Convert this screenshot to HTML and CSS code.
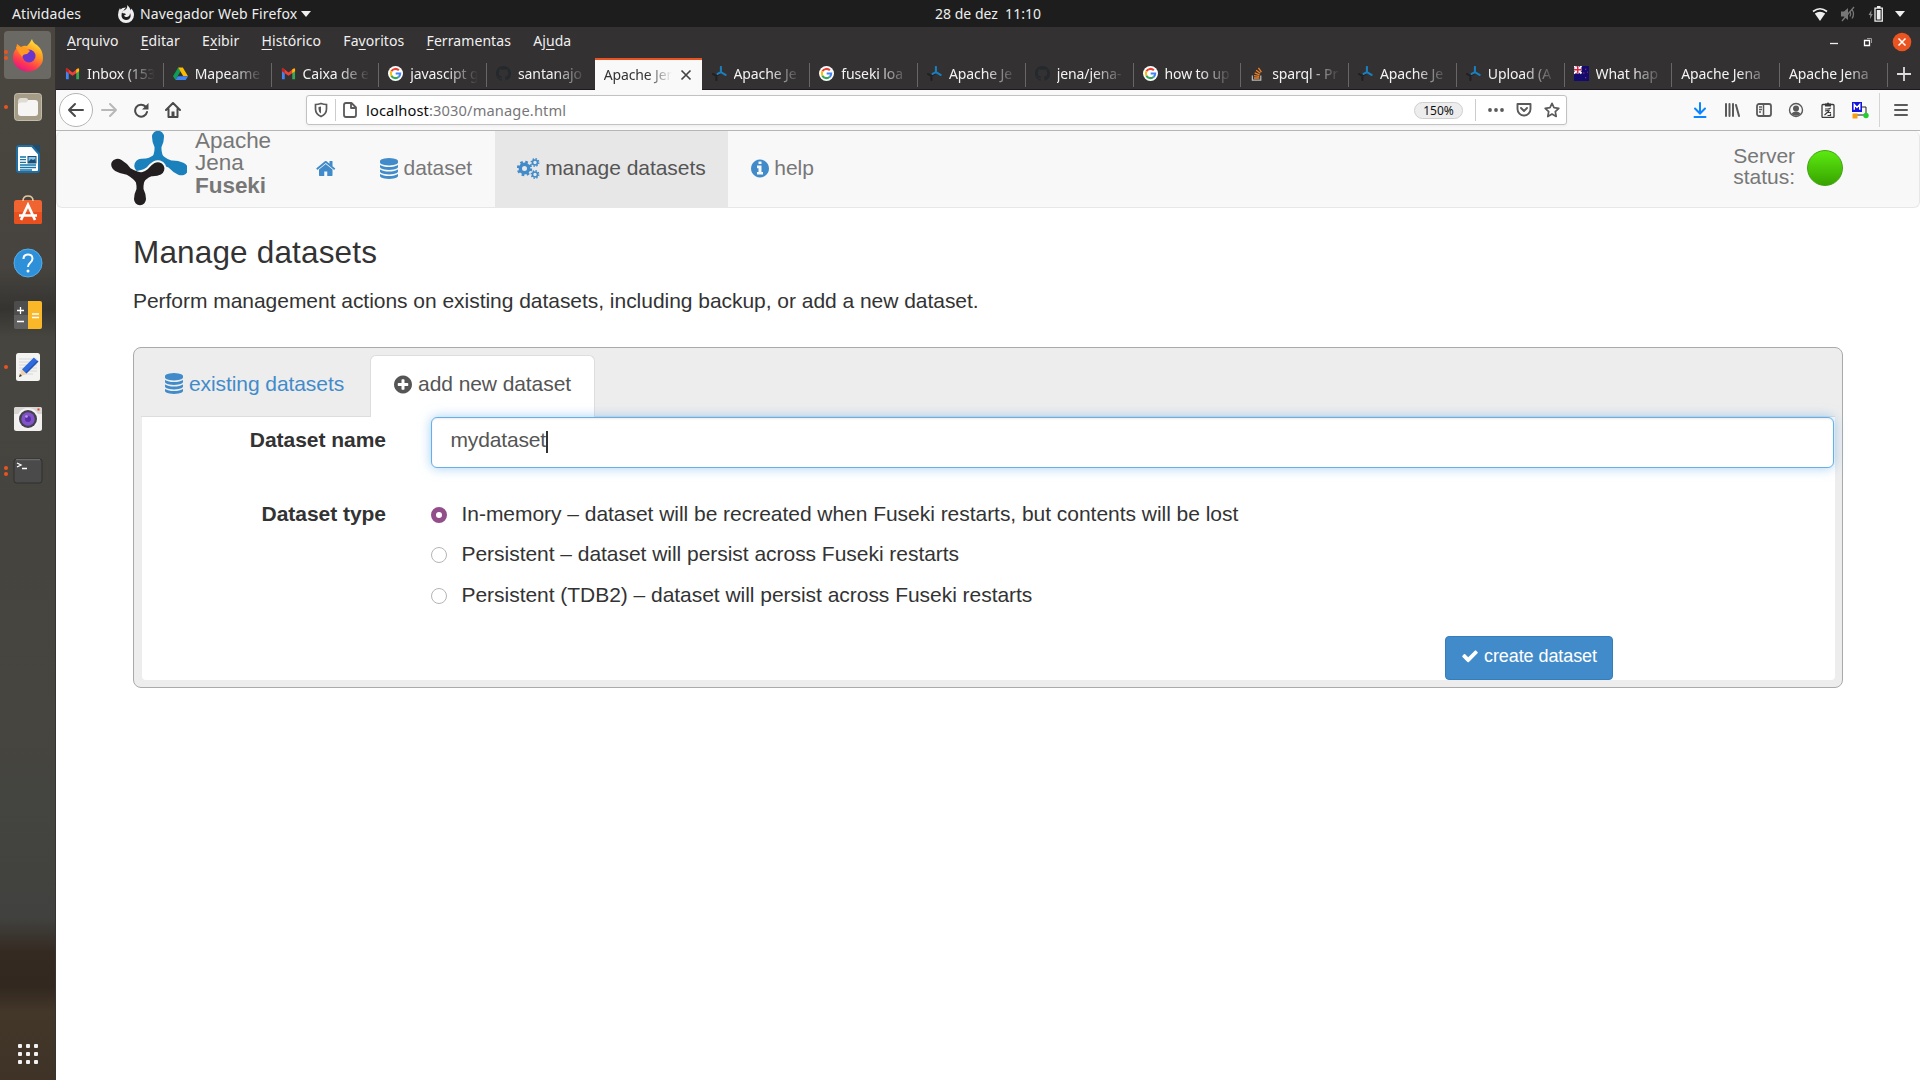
FILE: index.html
```html
<!DOCTYPE html>
<html lang="pt-BR">
<head>
<meta charset="utf-8">
<title>Apache Jena Fuseki</title>
<link rel="stylesheet" href="styles.css">
</head>
<body>
<svg class="defs" width="0" height="0">
  <symbol id="jena" viewBox="0 0 76 75">
    <g class="jena-top">
      <path transform="translate(47 27)" d="M-7 3Q-3-5-3.500-11-6-16-6-21A6 6.200 0 0 1 6-21Q6-16 3.500-11 3-5 7 3z"/>
      <path transform="translate(47 28) rotate(113) scale(1.080 1.180)" d="M-7 3Q-3-5-3.500-11-6-16-6-21A6 6.200 0 0 1 6-21Q6-16 3.500-11 3-5 7 3z"/>
      <path transform="translate(47 28) rotate(-112)" d="M-7 3Q-4-5-5-11-7-16-7-18A7 7 0 0 1 7-18Q7-16 5-11 4-5 7 3z"/>
    </g>
    <path class="jena-halo" transform="translate(29 47) rotate(61)" d="M-7 3Q-3-5-4-11-6-16-6-20A6 6.200 0 0 1 7-20Q7-16 4-11 3-5 7 3z"/>
    <g class="jena-bottom">
      <path transform="translate(29 47) rotate(61)" d="M-7 3Q-3-5-4-11-6-16-6-20A6 6.200 0 0 1 7-20Q7-16 4-11 3-5 7 3z"/>
      <path transform="translate(29 47) rotate(-60) scale(1.060 1.190)" d="M-7 3Q-3-5-3.500-11-6-16-6-21A6 6.200 0 0 1 6-21Q6-16 3.500-11 3-5 7 3z"/>
      <path transform="translate(29 47) rotate(180)" d="M-7 3Q-3-5-3.500-11-6-16-6-21A6 6.200 0 0 1 6-21Q6-16 3.500-11 3-5 7 3z"/>
    </g>
  </symbol>
  <symbol id="jena-small" viewBox="0 0 16 16"><g fill="none" stroke-width="2.200" stroke-linecap="round"><path stroke="#231f20" d="M1 8.500 4.500 10.500 8 8.500M4.700 10.500v4.500"/><path stroke="#1b7fbd" d="M9.500 1v5.500L6 8.500M9.500 6.500l5 3"/></g></symbol>
  <symbol id="gmail" viewBox="0 0 16 16"><path fill="#4285f4" d="M1 14V4l3 2v8z"/><path fill="#34a853" d="M12 14V6l3-2v10z"/><path fill="#ea4335" d="M1 3q1-1 2 0l5 4 5-4q1-1 2 0v2.500L8 10.500 1 5.500z"/><path fill="#c5221f" d="M1 3q1-1 3 .8v3.800L1 5.500z"/><path fill="#fbbc04" d="M15 3q-1-1-3 .8v3.800l3-2.100z"/></symbol>
  <symbol id="drive" viewBox="0 0 16 16"><path fill="#0f9d58" d="M5.500 1.500 0 11l2.600 4L8 5.500z"/><path fill="#fbbc04" d="M5.500 1.500h5L16 11h-5z"/><path fill="#4285f4" d="M5.200 11H16l-2.500 4H2.600z"/></symbol>
  <symbol id="google" viewBox="0 0 16 16"><circle cx="8" cy="8" r="8" fill="#fff"/><g fill="none" stroke-width="2.200"><path stroke="#ea4335" d="M11.600 4.600A5 5 0 0 0 3.600 5.700"/><path stroke="#fbbc05" d="M3.600 5.700a5 5 0 0 0 0 4.600"/><path stroke="#34a853" d="M3.600 10.300a5 5 0 0 0 7.700 1.400"/><path stroke="#4285f4" d="M11.300 11.700A5 5 0 0 0 13 8H8.200"/></g></symbol>
  <symbol id="github" viewBox="0 0 16 16"><path fill="#24292e" d="M8 0C3.580 0 0 3.580 0 8c0 3.540 2.290 6.530 5.470 7.590.4.070.55-.17.55-.38v-1.490c-2.010.37-2.530-.49-2.690-.94-.09-.23-.48-.94-.82-1.130-.28-.15-.68-.52-.01-.53.63-.01 1.080.58 1.230.82.72 1.210 1.870.87 2.330.66.07-.52.28-.87.51-1.070-1.780-.2-3.640-.89-3.640-3.950 0-.87.31-1.590.82-2.150-.08-.2-.36-1.020.08-2.120 0 0 .67-.21 2.200.82a7.600 7.600 0 0 1 4 0c1.530-1.040 2.200-.82 2.200-.82.44 1.100.16 1.920.08 2.120.51.56.82 1.270.82 2.150 0 3.070-1.870 3.750-3.650 3.950.29.25.54.73.54 1.480v2.200c0 .21.15.46.55.38A8 8 0 0 0 16 8c0-4.420-3.580-8-8-8z"/></symbol>
  <symbol id="stack" viewBox="0 0 16 16"><path fill="none" stroke="#bcbbbb" stroke-width="1.300" d="M2.500 10v5h9v-5"/><path stroke="#f48024" stroke-width="1.400" d="M4.200 12.800h5.700M4.300 10.200l5.600.9M5 7.400l5.200 2M6.500 4.500l4.500 3.200M9 2l3.200 4.500"/></symbol>
  <symbol id="flag" viewBox="0 0 16 16"><path fill="#130b6d" d="M0 0h16v16H0z"/><path stroke="#fff" stroke-width="2" d="M0 0l8 8M8 0 0 8"/><path stroke="#fff" stroke-width="3" d="M4 0v8M0 4h8"/><path stroke="#e0243c" stroke-width="1.600" d="M4 0v8M0 4h8"/><path fill="#e04a60" d="M12 3h1v1h-1zM10 7h1v1h-1zM14 6h1v1h-1zM12 12h1v1h-1z"/></symbol>
  <symbol id="db" viewBox="128 0 1536 1792"><path d="M896 768q237 0 443-43t325-127v170q0 69-103 128t-280 93.500-385 34.500-385-34.500-280-93.500-103-128v-170q119 84 325 127t443 43zm0 768q237 0 443-43t325-127v170q0 69-103 128t-280 93.500-385 34.500-385-34.500-280-93.500-103-128v-170q119 84 325 127t443 43zm0-384q237 0 443-43t325-127v170q0 69-103 128t-280 93.500-385 34.500-385-34.500-280-93.500-103-128v-170q119 84 325 127t443 43zm0-1152q208 0 385 34.500t280 93.500 103 128v128q0 69-103 128t-280 93.500-385 34.500-385-34.500-280-93.500-103-128v-128q0-69 103-128t280-93.500 385-34.500z"/></symbol>
</svg>

<header class="topbar">
  <span class="activities">Atividades</span>
  <span class="app"><svg width="16" height="18" viewBox="0 0 16 18"><path fill="#eee" d="M8 2.500q-4 0-5.500 2L2 3Q0 6 0 10a8 8 0 0 0 16 0q0-4-3-6.500v2Q12 2 9 0q1 3-2 5Q5 5 4 8q1 0 3 .5l1 1-2 1q1 2 3 1.500 3-.5 3-4 1 2 .5 4A4.700 4.700 0 0 1 3.500 11Q3 8 5 6z"/></svg><b>Navegador Web Firefox</b><i class="caret"></i></span>
  <span class="clock">28 de dez&nbsp; 11:10</span>
  <span class="tray">
    <svg width="16" height="14" viewBox="0 0 16 14"><path fill="#eee" d="M8 14 2.800 6.500Q8 2.800 13.200 6.500z"/><path d="M1 4.500Q8-1 15 4.500" fill="none" stroke="#eee" stroke-width="1.600"/></svg>
    <svg width="16" height="16" viewBox="0 0 16 16"><path fill="#777" d="M1 5.500h3L8 2v12L4 10.500H1z"/><path fill="none" stroke="#777" stroke-width="1.300" d="M10 5.500q1.500 2.500 0 5M12 3.500q3 4.500 0 9M2 15 14 1"/></svg>
    <svg width="16" height="16" viewBox="0 0 16 16"><path fill="#888" d="M3.500 4 .5 9H2.300L2 13 4.800 8H3.200z"/><path fill="none" stroke="#eee" stroke-width="1.300" d="M7 2.200h7.300v13H7z"/><path fill="#eee" d="M8.800 4h3.800v9.500H8.800zM9 0h3.500v2H9z"/></svg>
    <i class="caret"></i>
  </span>
</header>

<div class="desktop">
  <aside class="dock">
    <div class="launcher on"><i class="run"></i><i class="run"></i><svg width="32" height="34" viewBox="0 0 32 34"><defs><linearGradient id="fx" x1=".8" y1="0" x2=".3" y2="1"><stop offset="0" stop-color="#fff044"/><stop offset=".4" stop-color="#ff9a1f"/><stop offset=".75" stop-color="#ff3a4e"/><stop offset="1" stop-color="#e31587"/></linearGradient></defs><path fill="url(#fx)" d="M20 1q1 4 5 6 6 5 6 13a15 13.500 0 0 1-30 0q0-6 3-9l1-5 4 3q3-2 6-1 3-3 5-7z"/><circle cx="17" cy="18" r="6.500" fill="#6a35cf"/><path fill="#ff9b25" d="M4 9q4-1 6 1 4-1 8 3l-3 3q-4 0-5 3-4-5-6-10z"/></svg></div>
    <div class="launcher"><i class="run"></i><svg width="28" height="28" viewBox="0 0 28 28"><rect x=".5" y=".5" width="27" height="27" rx="3" fill="#a49c86" stroke="#c1bbaa"/><rect x="4" y="7" width="20" height="16" rx="3" fill="#f6f5f3"/><path fill="#dedbd2" d="M4 9q0-4 3-4h5q2 0 2 2t-3 2.500H7q-2 0-3 2z"/></svg></div>
    <div class="launcher"><svg width="24" height="28" viewBox="0 0 24 28"><path fill="#fff" stroke="#1f6fa5" stroke-width="2" d="M3 1h13l7 8v16q0 2-2 2H3q-2 0-2-2V3q0-2 2-2z"/><path fill="#174f79" d="M17 0h5q2 0 2 2v6z"/><path stroke="#1274a8" stroke-width="1.300" d="M4 12h6M4 14.700h6M4 17.300h6M4 20h16M4 22.500h16M4 25h12"/><rect x="12" y="11.500" width="8" height="6.500" fill="#8bc1e2" stroke="#174f79"/><path d="m12 17 3-3 2 1 2-1 1 4h-8z" fill="#174f79"/></svg></div>
    <div class="launcher"><svg class="store" width="28" height="30" viewBox="0 0 28 30"><rect x="0" y="5" width="28" height="24" rx="2.500" fill="#ef6430"/><path fill="#e8501f" d="M0 17h28v10q0 2-2 2H2q-2 0-2-2z"/><path fill="none" stroke="#e3c9a2" stroke-width="1.600" d="M9 6q0-5 5-5t5 5"/><path fill="none" stroke="#fff" stroke-width="2.700" d="m7 25 7-15 7 15M5 20.500h18"/></svg></div>
    <div class="launcher"><svg width="30" height="30" viewBox="0 0 30 30"><circle cx="15" cy="15" r="14" fill="#2e90d8" stroke="#59ade6"/><path fill="none" stroke="#fff" stroke-width="2" d="M10.500 11q0-4.500 4.500-4.500t4.500 4q0 2.500-2.500 4.500-2 1.500-2 4"/><circle cx="15" cy="23" r="1.500" fill="#fff"/></svg></div>
    <div class="launcher"><svg width="28" height="28" viewBox="0 0 28 28"><rect width="28" height="28" rx="2" fill="#4d4d4d"/><path fill="#606060" d="M0 14h14v14H2q-2 0-2-2z"/><path fill="#fab728" d="M14 0h12q2 0 2 2v24q0 2-2 2H14z"/><path stroke="#fff" stroke-width="1.300" d="M3 9.500h7M6.500 6v7M3 20.500h7M18 13h7M18 16.500h7"/></svg></div>
    <div class="launcher"><i class="run"></i><svg width="26" height="28" viewBox="0 0 26 28"><rect x="1" width="24" height="28" rx="2.500" fill="#f3f3f2"/><path stroke="#d7d7d7" d="M4 6h18M4 9h18M4 12h18M4 15h18M4 18h18M4 21h14"/><path stroke="#2f6bdc" stroke-width="6" d="M9 18.500 21 6.500"/><path stroke="#2451b4" stroke-width="1.500" d="M11 20 23 8"/><path fill="#f1cfa7" d="m7 16.500 4.300 4.300L4 24z"/><path fill="#333" d="m5 21 2 2-3 1z"/></svg></div>
    <div class="launcher"><svg width="28" height="26" viewBox="0 0 28 26"><rect y="1" width="28" height="24" rx="2.500" fill="#f1efed"/><path fill="#d8d5d2" d="M0 3q0-2 2-2h24q2 0 2 2v5H0z"/><circle cx="14" cy="13" r="11" fill="#f4f3f2"/><circle cx="14" cy="13" r="9" fill="#42404d"/><circle cx="14" cy="13" r="6.700" fill="#8252c9"/><circle cx="14" cy="13" r="3" fill="#5a2fa5"/><circle cx="12.500" cy="10.500" r="1.300" fill="#b99be6"/><path fill="#dd3b3b" d="M23.500 2.500h2v2h-2z"/></svg></div>
    <div class="launcher"><i class="run"></i><i class="run"></i><svg width="30" height="26" viewBox="0 0 30 26"><rect x="1" y="1" width="28" height="24" rx="2.500" fill="#4a4a4a" stroke="#2e2e2e"/><path stroke="#777" d="M3 1.700h24"/><path fill="none" stroke="#fff" stroke-width="1.300" d="m4 5 4 2-4 2M9 10.500h5"/></svg></div>
    <div class="grid"><i></i><i></i><i></i><i></i><i></i><i></i><i></i><i></i><i></i></div>
  </aside>

  <div class="window">
    <div class="menubar">
      <nav class="menus"><span><u>A</u>rquivo</span><span><u>E</u>ditar</span><span>E<u>x</u>ibir</span><span><u>H</u>istórico</span><span>Fa<u>v</u>oritos</span><span><u>F</u>erramentas</span><span>Aj<u>u</u>da</span></nav>
      <div class="controls">
        <svg width="10" height="14" viewBox="0 0 10 14"><path stroke="#eee" stroke-width="1.300" d="M1 8.500h8"/></svg>
        <svg width="10" height="10" viewBox="0 0 10 10"><path fill="none" stroke="#fff" stroke-width="1.300" d="M1.500 3.500h5v5h-5z"/><path fill="none" stroke="#999" d="M4 1.500h4.500V6"/></svg>
        <svg width="20" height="20" viewBox="0 0 20 20"><circle cx="10" cy="10" r="9.300" fill="#e95420"/><path stroke="#fff" stroke-width="1.500" d="m6.500 6.500 7 7m0-7-7 7"/></svg>
      </div>
    </div>

    <div class="tabs">
      <div class="tab"><svg><use href="#gmail"/></svg><span>Inbox (153</span></div>
      <div class="tab"><svg><use href="#drive"/></svg><span>Mapeame</span></div>
      <div class="tab"><svg><use href="#gmail"/></svg><span>Caixa de e</span></div>
      <div class="tab"><svg><use href="#google"/></svg><span>javascipt g</span></div>
      <div class="tab before"><svg><use href="#github"/></svg><span>santanajo</span></div>
      <div class="tab active"><span>Apache Jen</span><svg viewBox="0 0 16 16"><path stroke="#444" stroke-width="1.700" d="m3.500 3.500 9 9m0-9-9 9"/></svg></div>
      <div class="tab"><svg><use href="#jena-small"/></svg><span>Apache Je</span></div>
      <div class="tab"><svg><use href="#google"/></svg><span>fuseki loa</span></div>
      <div class="tab"><svg><use href="#jena-small"/></svg><span>Apache Je</span></div>
      <div class="tab"><svg><use href="#github"/></svg><span>jena/jena-</span></div>
      <div class="tab"><svg><use href="#google"/></svg><span>how to up</span></div>
      <div class="tab"><svg><use href="#stack"/></svg><span>sparql - Pr</span></div>
      <div class="tab"><svg><use href="#jena-small"/></svg><span>Apache Je</span></div>
      <div class="tab"><svg><use href="#jena-small"/></svg><span>Upload (A</span></div>
      <div class="tab"><svg><use href="#flag"/></svg><span>What hap</span></div>
      <div class="tab"><span>Apache Jena</span></div>
      <div class="tab"><span>Apache Jena</span></div>
      <div class="newtab"><svg width="16" height="16" viewBox="0 0 16 16"><path stroke="#ddd" stroke-width="1.800" d="M8 1v14M1 8h14"/></svg></div>
    </div>

    <div class="toolbar">
      <span class="back"><svg width="18" height="16" viewBox="0 0 18 16"><path fill="none" stroke="#4a4a4b" stroke-width="2" stroke-linecap="round" stroke-linejoin="round" d="M16 8H2m6-6L2 8l6 6"/></svg></span>
      <svg class="fwd" width="18" height="16" viewBox="0 0 18 16"><path fill="none" stroke="#b8b8b8" stroke-width="2" stroke-linecap="round" stroke-linejoin="round" d="M2 8h14m-6-6 6 6-6 6"/></svg>
      <svg class="reload" width="16" height="16" viewBox="0 0 16 16"><path fill="none" stroke="#4a4a4b" stroke-width="2" stroke-linecap="round" d="M12.500 4.500A6 6 0 1 0 14 10"/><path fill="#4a4a4b" d="M15.500 1v6.500H9z"/></svg>
      <svg class="house" width="16" height="16" viewBox="0 0 16 16"><path fill="none" stroke="#4a4a4b" stroke-width="2" stroke-linecap="round" stroke-linejoin="round" d="m1 8 7-7 7 7M3.500 7v8h9V7"/><path fill="#4a4a4b" d="M6.500 9.500h3V15h-3z"/></svg>
      <div class="urlbar">
        <svg class="shield" width="14" height="16" viewBox="0 0 14 16"><path fill="none" stroke="#5a5a5b" stroke-width="1.700" d="M7 1.500q3 1 5.500 1V7q0 5-5.500 7.500Q1.500 12 1.500 7V2.500q2.500 0 5.500-1z"/><path fill="#5a5a5b" d="M7 4.500v7Q4.500 10 4.500 7V5z"/></svg>
        <i class="sep"></i>
        <svg class="page" width="14" height="16" viewBox="0 0 14 16"><path fill="none" stroke="#5a5a5b" stroke-width="1.800" stroke-linejoin="round" d="M3 1h5.500L13 5.500V13q0 2-2 2H3q-2 0-2-2V3q0-2 2-2zM8 1v5h5"/></svg>
        <span class="url">localhost<em>:3030/manage.html</em></span>
        <span class="zoom">150%</span>
        <i class="sep"></i>
        <svg class="dots" width="16" height="16" viewBox="0 0 16 16"><circle cx="2" cy="8" r="1.900"/><circle cx="8" cy="8" r="1.900"/><circle cx="14" cy="8" r="1.900"/></svg>
        <svg class="pocket" width="16" height="16" viewBox="0 0 16 16"><path fill="none" stroke="#5a5a5b" stroke-width="1.900" stroke-linecap="round" stroke-linejoin="round" d="M1.500 2h13v5a6.500 6.500 0 0 1-13 0zM5 6l3 3 3-3"/></svg>
        <svg class="star" width="16" height="16" viewBox="0 0 16 16"><path fill="none" stroke="#5a5a5b" stroke-width="1.700" stroke-linejoin="round" d="m8 1.300 2 4.400 4.800.6-3.500 3.300.9 4.900L8 12.100l-4.200 2.400.9-4.900L1.200 6.300 6 5.700z"/></svg>
      </div>
      <div class="tools">
        <svg width="16" height="16" viewBox="0 0 16 16"><path fill="none" stroke="#0a84ff" stroke-width="2" stroke-linecap="round" d="M8 1v10M3 6.500 8 11.500l5-5M2.500 15h11"/></svg>
        <svg width="16" height="16" viewBox="0 0 16 16"><path stroke="#5a5a5b" stroke-width="2" stroke-linecap="round" d="M2 2v12M5.500 2v12M9 2v12M12 3l3 11"/></svg>
        <svg width="16" height="16" viewBox="0 0 16 16"><rect x="1" y="2" width="14" height="12" rx="2" fill="none" stroke="#5a5a5b" stroke-width="1.800"/><path stroke="#5a5a5b" stroke-width="1.500" d="M7.500 2v12M3 5h3M3 7.500h3M3 10h2"/></svg>
        <svg width="16" height="16" viewBox="0 0 16 16"><circle cx="8" cy="8" r="6.500" fill="none" stroke="#5a5a5b" stroke-width="1.400"/><circle cx="8" cy="6.500" r="3" fill="#5a5a5b"/><path fill="#5a5a5b" d="M3.500 12q1-2.500 4.500-2.500t4.500 2.500Q8 15.500 3.500 12z"/></svg>
        <svg width="16" height="16" viewBox="0 0 16 16"><rect x="2" y="2.500" width="12" height="13" rx="1" fill="none" stroke="#3a3a3b" stroke-width="1.300"/><path fill="#3a3a3b" d="M5 1.500h2a1 1 0 0 1 2 0h2v3H5z"/><path fill="none" stroke="#3a3a3b" stroke-width="1.200" d="M5 7h3l3-1M5 9l5-1M4.500 13 9 9M8 10.500h3M7.500 13.500h3v-2"/></svg>
        <svg width="18" height="17" viewBox="0 0 18 17"><path fill="none" stroke="#222" d="M11 5h4v8H5"/><path fill="#1414e0" d="M1 0h10v10H1z"/><path fill="none" stroke="#fff" stroke-width="1.400" d="M3.300 7.800V2.500L6 5.500l2.700-3v5.300"/><path fill="#f79d12" d="M1.500 11.500h5v5h-5z"/><circle cx="15" cy="13.500" r="2.700" fill="#22cf2e"/></svg>
        <i class="sep tall"></i>
        <svg width="16" height="16" viewBox="0 0 16 16"><path stroke="#5a5a5b" stroke-width="2" stroke-linecap="round" d="M2 3h12M2 8h12M2 13h12"/></svg>
      </div>
    </div>

    <main class="web">
      <div class="navbar">
        <div class="brand"><svg width="76" height="75"><use href="#jena"/></svg><span>Apache<br>Jena<br><b>Fuseki</b></span></div>
        <div class="navitem home"><svg width="19.500" height="21" viewBox="64 0 1664 1792"><path d="M1472 992v480q0 26-19 45t-45 19h-384v-384h-256v384h-384q-26 0-45-19t-19-45v-480q0-1 .5-3t.5-3l575-474 575 474q1 2 1 6zm223-69l-62 74q-8 9-21 11h-3q-13 0-21-7l-692-577-692 577q-12 8-24 7-13-2-21-11l-62-74q-8-10-7-23.500t11-21.500l719-599q32-26 76-26t76 26l244 204v-195q0-14 9-23t23-9h192q14 0 23 9t9 23v408l219 182q10 8 11 21.500t-7 23.500z"/></svg></div>
        <div class="navitem"><svg width="18" height="21"><use href="#db"/></svg><span>dataset</span></div>
        <div class="navitem current"><svg width="22.500" height="21" viewBox="0 0 22.500 21"><g fill="none"><circle cx="7.500" cy="10.500" r="4.200" stroke="#428bca" stroke-width="3.400"/><circle cx="7.500" cy="10.500" r="6.500" stroke="#428bca" stroke-width="2.400" stroke-dasharray="2.600 2.505"/><circle cx="18" cy="4.500" r="2.500" stroke="#428bca" stroke-width="1.600"/><circle cx="18" cy="4.500" r="3.700" stroke="#428bca" stroke-width="1.500" stroke-dasharray="1.450 1.456"/><circle cx="18" cy="16.500" r="2.500" stroke="#428bca" stroke-width="1.600"/><circle cx="18" cy="16.500" r="3.700" stroke="#428bca" stroke-width="1.500" stroke-dasharray="1.450 1.456"/></g></svg><span>manage datasets</span></div>
        <div class="navitem"><svg width="18" height="21" viewBox="128 0 1536 1792"><path d="M1152 1376v-160q0-14-9-23t-23-9h-96v-512q0-14-9-23t-23-9h-320q-14 0-23 9t-9 23v160q0 14 9 23t23 9h96v320h-96q-14 0-23 9t-9 23v160q0 14 9 23t23 9h448q14 0 23-9t9-23zm-128-896v-160q0-14-9-23t-23-9h-192q-14 0-23 9t-9 23v160q0 14 9 23t23 9h192q14 0 23-9t9-23zm640 416q0 209-103 385.500t-279.500 279.500-385.500 103-385.500-103-279.500-279.500-103-385.500 103-385.500 279.500-279.500 385.500-103 385.500 103 279.500 279.500 103 385.500z"/></svg><span>help</span></div>
        <div class="status"><span>Server<br>status:</span><i class="led"></i></div>
      </div>

      <section class="content">
        <h1>Manage datasets</h1>
        <p>Perform management actions on existing datasets, including backup, or add a new dataset.</p>
        <div class="panel">
          <div class="pills">
            <div class="pill"><svg width="18" height="21"><use href="#db"/></svg><span>existing datasets</span></div>
            <div class="pill selected"><svg width="18" height="21" viewBox="128 0 1536 1792"><path d="M1344 960v-128q0-26-19-45t-45-19h-256v-256q0-26-19-45t-45-19h-128q-26 0-45 19t-19 45v256h-256q-26 0-45 19t-19 45v128q0 26 19 45t45 19h256v256q0 26 19 45t45 19h128q26 0 45-19t19-45v-256h256q26 0 45-19t19-45zm320-64q0 209-103 385.500t-279.500 279.500-385.500 103-385.500-103-279.500-279.500-103-385.500 103-385.500 279.500-279.500 385.500-103 385.500 103 279.500 279.500 103 385.500z"/></svg><span>add new dataset</span></div>
          </div>
          <form class="form">
            <div class="row"><label class="lbl">Dataset name</label><div class="input">mydataset<i class="cursor"></i></div></div>
            <div class="row types"><label class="lbl">Dataset type</label>
              <div class="radios">
                <div class="radio"><i class="dot checked"></i><span>In-memory – dataset will be recreated when Fuseki restarts, but contents will be lost</span></div>
                <div class="radio"><i class="dot"></i><span>Persistent – dataset will persist across Fuseki restarts</span></div>
                <div class="radio"><i class="dot"></i><span>Persistent (TDB2) – dataset will persist across Fuseki restarts</span></div>
              </div>
            </div>
            <div class="actions"><div class="btn"><svg width="18" height="18" viewBox="0 0 1792 1792"><path d="M1671 566q0 40-28 68l-724 724-136 136q-28 28-68 28t-68-28l-136-136-362-362q-28-28-28-68t28-68l136-136q28-28 68-28t68 28l294 295 656-657q28-28 68-28t68 28l136 136q28 28 28 68z"/></svg><span>create dataset</span></div></div>
          </form>
        </div>
      </section>
    </main>
  </div>
</div>
</body>
</html>
```
FILE: styles.css
```css
* { box-sizing: border-box; }
body { margin: 0; width: 1920px; height: 1080px; overflow: hidden; background: #fff; font-family: "Noto Sans", sans-serif; font-size: 14px; display: flex; flex-direction: column; }
svg { display: block; flex: none; }
b { font-weight: inherit; }
.defs { position: absolute; }

/* system bar */
.topbar { height: 27px; flex: none; background: #1d1d1d; color: #eee; display: grid; grid-template-columns: 1fr auto 1fr; grid-template-rows: 27px; align-items: center; line-height: 27px; }
.activities { grid-area: 1 / 1; padding-left: 12px; letter-spacing: .1px; }
.app { grid-area: 1 / 1; margin-left: 118px; display: flex; align-items: center; gap: 6px; letter-spacing: .16px; }
.caret { border: 5px solid transparent; border-top: 6px solid #eee; border-bottom: 0; }
.app .caret { margin-left: -2px; }
.clock { grid-area: 1 / 2; padding-left: 56px; }
.tray { grid-area: 1 / 3; justify-self: end; display: flex; align-items: center; gap: 12px; padding-right: 15px; }
.tray .caret { margin-left: -1px; }

.desktop { flex: 1; display: flex; min-height: 0; }

/* dock */
.dock { width: 56px; flex: none; padding: 4px 4px 0; display: flex; flex-direction: column; gap: 4px; border-right: 1px solid #34332f; background: linear-gradient(#4a463f 0, #47443f 240px, #353431 282px, #47453f 310px, #45443f 500px, #464540 700px, #41423f 890px, #352a22 925px, #33281f 960px, #43372a 985px, #3f3327 100%); }
.launcher { height: 48px; flex: none; border-radius: 4px; display: grid; place-items: center; position: relative; }
.launcher.on { background: #6b6964; }
.launcher svg { grid-area: 1 / 1; }
.store { margin-bottom: 3px; }
.run { position: absolute; left: 0; top: 22px; width: 4px; height: 4px; border-radius: 50%; background: #e95420; }
.run:first-child:has(+ .run) { top: 19px; }
.run + .run { top: 25px; }
.grid { margin: auto auto 16px; display: grid; grid-template-columns: repeat(3, 4px); gap: 4px; }
.grid i { width: 4px; height: 4px; border-radius: 1px; background: #f2f2f2; }

/* browser chrome */
.window { flex: 1; min-width: 0; display: flex; flex-direction: column; }
.menubar { height: 31px; flex: none; background: #333132; color: #f0f0f0; display: flex; justify-content: space-between; padding: 0 8px 0 11px; }
.menus { display: flex; gap: 22.2px; line-height: 28px; letter-spacing: .08px; }
.menus u { text-underline-offset: 3px; }
.controls { display: flex; align-items: center; gap: 24px; padding-bottom: 1px; }
.controls svg:last-child { margin-left: -5px; }
.tabs { height: 32px; flex: none; background: #333132; border-bottom: 1px solid #201821; display: flex; color: #f3f3f3; }
.tab { flex: 0 0 107.75px; min-width: 0; display: flex; align-items: center; gap: 7px; padding: 0 7px 0 9px; position: relative; line-height: 31px; }
.tab::after { content: ""; position: absolute; right: 0; top: 5px; width: 1px; height: 24px; background: #686667; }
.tab.before::after, .tab.active::after { display: none; }
.tab svg { width: 15px; height: 15px; }
.tab span { flex: 1; white-space: nowrap; letter-spacing: -.1px; -webkit-mask-image: linear-gradient(to left, transparent 2px, #000 34px); mask-image: linear-gradient(to left, transparent 2px, #000 34px); }
.tab.active { background: #f9f9fa; color: #333; border-top: 2px solid #e95420; height: 32px; margin-right: -.75px; flex-basis: 107px; margin-right: .75px; padding-right: 10px; gap: 3px; line-height: 28px; }
.tab.active span { letter-spacing: -.15px; -webkit-mask-image: linear-gradient(to left, transparent 3px, #000 28px); mask-image: linear-gradient(to left, transparent 3px, #000 28px); }
.tab.active svg { width: 16px; height: 16px; }
.newtab { flex: 1; display: grid; place-items: center; }
.toolbar { height: 41px; flex: none; background: #f9f9fa; border-bottom: 1px solid #b6b6b7; display: flex; align-items: center; padding: 0 11px 0 3px; }
.back { width: 34px; height: 34px; border: 1px solid #b5b5b5; border-radius: 50%; background: #fff; display: grid; place-items: center; }
.fwd { margin-left: 7px; }
.reload { margin-left: 15px; }
.house { margin-left: 16px; }
.urlbar { width: 1261px; height: 30px; margin-left: 125px; background: #fff; border: 1px solid #c2c2c3; border-radius: 3px; display: flex; align-items: center; padding: 0 6px 0 7px; box-shadow: 0 1px 3px rgba(0,0,0,.06); }
.sep { width: 1px; height: 22px; background: #ccc; }
.shield { margin-right: 7px; }
.page { margin: 0 9px 0 7px; }
.url { flex: 1; color: #0c0c0d; font-size: 14.67px; letter-spacing: .12px; line-height: 28px; }
.url em { font-style: normal; color: #77777a; }
.zoom { width: 49px; height: 17px; border: 1px solid #cfcfcf; border-radius: 9px; background: #ededee; font-size: 12px; line-height: 15px; text-align: center; margin-right: 12px; color: #111; }
.dots { fill: #5a5a5b; margin-left: 12px; }
.pocket { margin-left: 12px; }
.star { margin-left: 12px; }
.tools { margin-left: auto; display: flex; align-items: center; gap: 16px; }
.tools svg:nth-of-type(6) { margin: 0 -6px 0 -1px; }
.sep.tall { height: 34px; margin-right: -3px; background: #d4d4d5; }

/* page */
.web { flex: 1; font-family: "Liberation Sans", sans-serif; font-size: 21px; letter-spacing: -.035px; color: #333; }
.navbar { height: 77px; background: #f8f8f8; border: 1px solid #e7e7e7; border-top: 0; border-radius: 6px; display: flex; color: #777; }
.brand { width: 241px; padding-left: 54px; display: flex; gap: 8px; font-size: 22.5px; line-height: 22.5px; }
.brand span { margin-top: -1.5px; }
.brand b { font-weight: bold; }
.jena-top { fill: #1b81bc; }
.jena-halo { fill: none; stroke: #f8f8f8; stroke-width: 4px; }
.jena-bottom { fill: #231f20; }
.navitem { display: flex; align-items: center; gap: 5.5px; padding: 0 22.5px; line-height: 75px; }
.navitem svg { fill: #428bca; margin-bottom: 2px; }
.navitem span { margin-bottom: 3px; }
.navitem.home { padding: 0 22px 0 18px; }
.current { background: #e7e7e7; color: #555; }
.status { margin-left: auto; display: flex; gap: 12px; padding: 14px 76px 0 0; line-height: 21px; }
.led { width: 36px; height: 36px; margin-top: 5px; border-radius: 50%; border: 1px solid #41a313; background: linear-gradient(#5bea10, #38a300); }
.content { padding: 26px 77px 0; }
h1 { margin: 0; font-size: 31.5px; font-weight: normal; line-height: 36px; letter-spacing: .16px; }
p { margin: 16px 0 31px; line-height: 30px; }
.panel { height: 341px; border: 1px solid #aaa; border-radius: 8px; background: #ededed; padding: 7px; display: flex; flex-direction: column; }
.pills { height: 62px; flex: none; display: flex; border-bottom: 1px solid #ddd; padding-left: 1px; }
.pill { display: flex; align-items: center; gap: 6px; padding: 0 24px 5px 23px; height: 62px; color: #428bca; fill: #428bca; letter-spacing: -.08px; }
.pill.selected { margin-left: 2px; background: #fff; color: #555; fill: #555; border: 1px solid #ddd; border-bottom: 0; border-radius: 6px 6px 0 0; padding: 0 23px 5px 23px; gap: 6px; }
.form { width: 1693px; height: 263px; background: #fff; border-radius: 0 0 4px 4px; margin-left: 1px; }
.row { display: flex; }
.lbl { width: 244px; margin-right: 45px; text-align: right; font-weight: bold; line-height: 30px; padding-top: 8px; }
.input { width: 1403px; height: 51px; border: 1px solid #66afe9; border-radius: 6px; background: #fff; color: #555; padding: 7px 18.5px; line-height: 30px; letter-spacing: -.15px; display: flex; box-shadow: inset 0 1px 2px rgba(0,0,0,.075), 0 0 12px rgba(102,175,233,.6); }
.cursor { width: 2px; height: 22px; margin-top: 6px; background: #333; }
.types { margin-top: 23px; }
.radios { padding-top: 8px; display: flex; flex-direction: column; gap: 10.300px; }
.radio { display: flex; align-items: center; gap: 14.500px; line-height: 30px; }
.dot { width: 16px; height: 16px; border: 1px solid #b5b5b5; border-radius: 50%; background: #fff; margin-top: 2px; }
.dot.checked { border: 5px solid #924d8b; }
.actions { margin-top: 26.4px; display: flex; justify-content: flex-end; padding-right: 222px; }
.btn { width: 168px; height: 44px; border: 1px solid #357ebd; border-radius: 4px; background: #428bca; color: #fff; fill: #fff; font-size: 18px; letter-spacing: -.08px; display: flex; align-items: center; gap: 5px; padding: 0 0 3px 15px; }
```
